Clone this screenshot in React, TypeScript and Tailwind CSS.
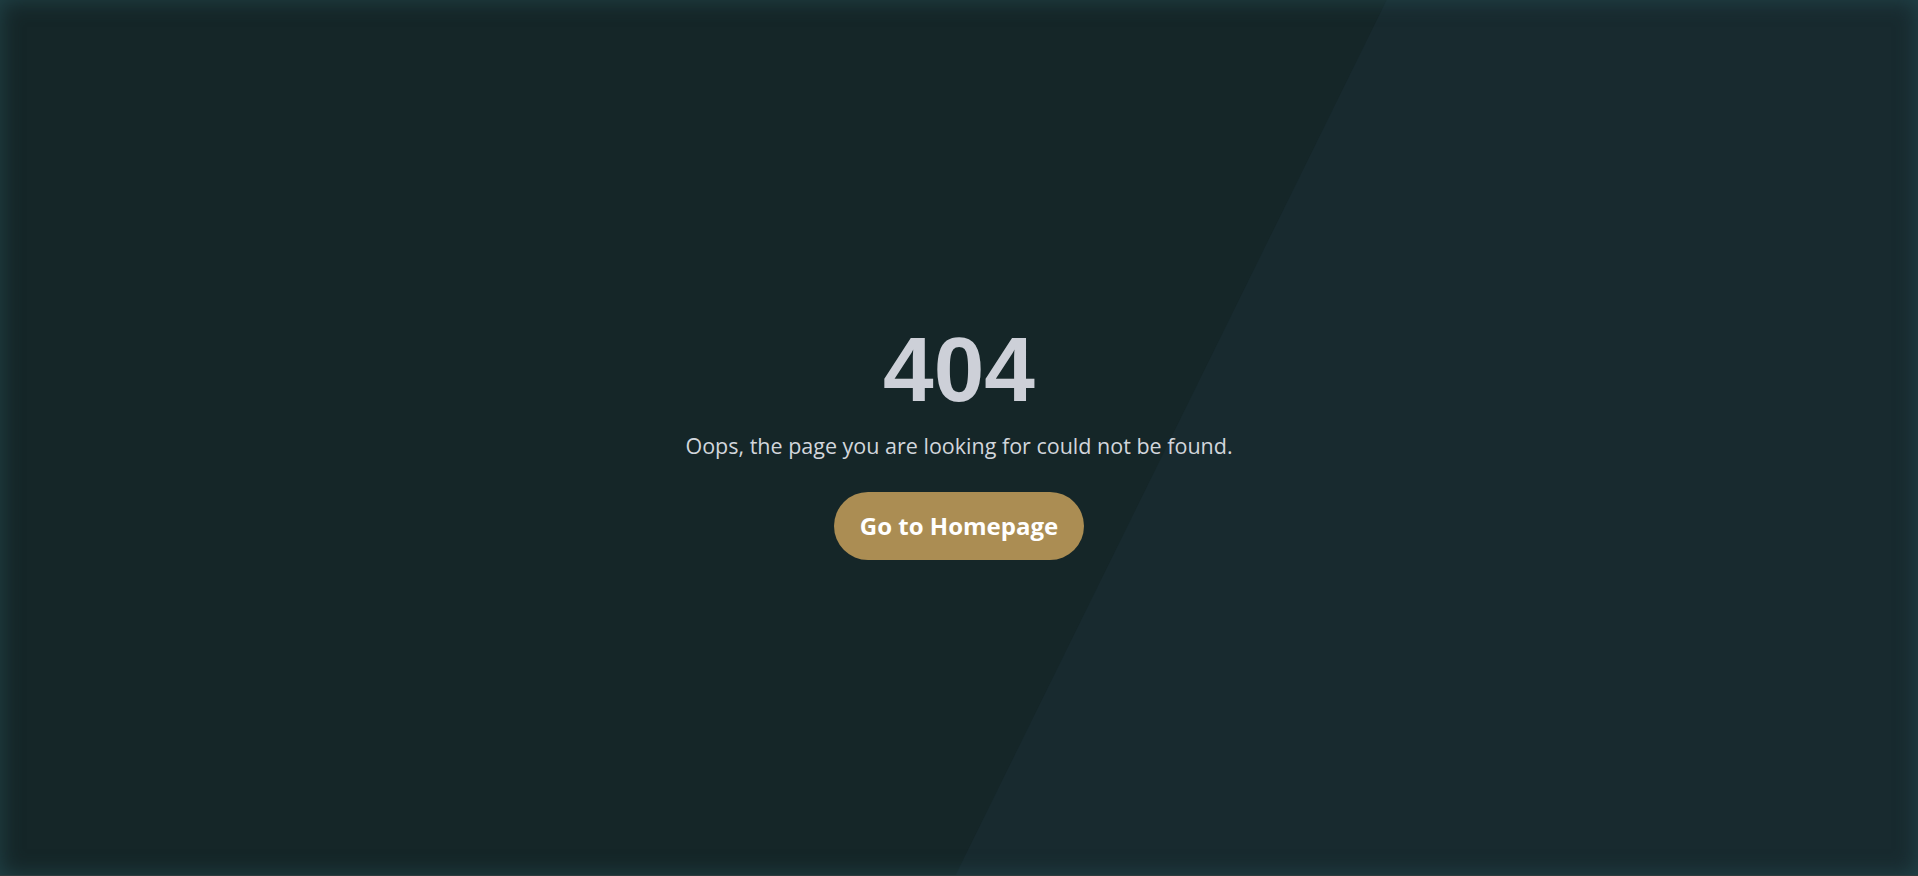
export default function App() {
  return (
    <main className="relative h-[876px] w-full overflow-hidden bg-[#152628]">
      {/* diagonal lighter panel */}
      <div className="absolute inset-0 bg-[#182a2f] [clip-path:polygon(72.3%_0,100%_0,100%_100%,49.8%_100%)]"></div>

      {/* edge glow */}
      <div className="pointer-events-none absolute inset-0 shadow-[inset_0_0_22px_rgba(38,78,84,0.75)]"></div>

      <div className="relative flex h-full flex-col items-center justify-center pt-[7px]">
        <h1 className="font-['Liberation_Sans',Arial,sans-serif] text-[91px] font-bold leading-none text-[#cdd0d8]">
          404
        </h1>
        <p className="mt-[16px] font-['Open_Sans',sans-serif] text-[21.5px] leading-[30px] text-[#d2d6dc]">
          Oops, the page you are looking for could not be found.
        </p>
        <button className="mt-[31px] h-[68px] w-[250px] rounded-full bg-[#ab8d53] font-['Open_Sans',sans-serif] text-[24px] font-bold text-white">
          Go to Homepage
        </button>
      </div>

      <div className="absolute bottom-0 left-0 h-px w-full bg-[#2e3b3d]"></div>
    </main>
  );
}
